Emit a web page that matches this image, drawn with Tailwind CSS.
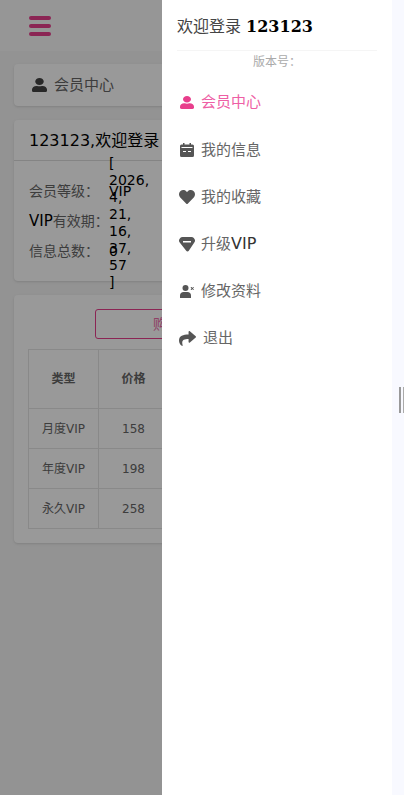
<!DOCTYPE html>
<html lang="zh-CN">
<head>
  <meta charset="UTF-8">
  <meta name="viewport" content="width=device-width, initial-scale=1.0">
  <title>会员中心</title>
  <script src="https://cdn.jsdelivr.net/npm/@tailwindcss/browser@4"></script>
</head>
<body class="bg-[#f5f5f5] font-['DejaVu_Sans','Noto_Sans_CJK_SC',sans-serif] text-[#333]">
  <div class="relative h-[795px] w-[404px] overflow-hidden">
    <!-- Page behind the drawer -->
    <header class="flex h-[51px] items-center bg-[#fafafa] pl-[29px]">
      <div class="flex w-[22px] flex-col gap-[4px]">
        <span class="h-[4px] rounded-full bg-[#e83e8c]"></span>
        <span class="h-[4px] rounded-full bg-[#e83e8c]"></span>
        <span class="h-[4px] rounded-full bg-[#e83e8c]"></span>
      </div>
    </header>

    <main class="flex flex-col gap-[14px] px-[14px] pt-[13px]">
      <!-- Title card -->
      <div class="flex h-[42px] items-center gap-[7px] rounded bg-white pl-[18px] text-[15px] text-[#666] shadow-sm">
        <svg viewBox="0 0 448 512" preserveAspectRatio="none" class="h-[14px] w-[15px] fill-[#444]"><path d="M224 256c70.7 0 128-57.3 128-128S294.7 0 224 0 96 57.3 96 128s57.3 128 128 128zm89.6 32h-16.7c-22.2 10.2-46.9 16-72.9 16s-50.6-5.8-72.9-16h-16.7C60.2 288 0 348.2 0 422.4V464c0 26.5 21.5 48 48 48h352c26.500 0 48-21.5 48-48v-41.6c0-74.2-60.2-134.4-134.4-134.4z"/></svg>
        <span>会员中心</span>
      </div>

      <!-- Member info card -->
      <div class="h-[161px] rounded bg-white shadow-sm">
        <div class="flex h-[41px] items-center border-b border-[#ddd] pl-[15px] pt-[2px] text-[16px] text-black">123123,欢迎登录</div>
        <div class="flex flex-col pl-[15px] pt-[15px] text-[14px] text-[#666]">
          <div class="flex h-[30px] items-center">
            <span class="w-[80px] shrink-0 whitespace-nowrap">会员等级&#65306;</span>
            <span class="text-black">VIP</span>
          </div>
          <div class="flex h-[30px] items-center">
            <span class="w-[80px] shrink-0 whitespace-nowrap"><span class="text-[15px] text-black">VIP</span>有效期&#65306;</span>
            <span class="pt-[4px] leading-[17px] text-black">[<br>2026,<br>4,<br>21,<br>16,<br>37,<br>57<br>]</span>
          </div>
          <div class="flex h-[30px] items-center">
            <span class="w-[80px] shrink-0 whitespace-nowrap">信息总数&#65306;</span>
            <span class="text-black">0</span>
          </div>
        </div>
      </div>

      <!-- VIP price card -->
      <div class="h-[248px] rounded bg-white pt-[14px] shadow-sm">
        <button class="mx-auto block h-[30px] w-[214px] rounded-[3px] border border-[#e83e8c] pl-[57px] text-left text-[14px] text-[#ee6aa8]">购买VIP</button>
        <table class="ml-[14px] mt-[10px] w-[348px] table-fixed border-collapse text-center text-[12px] text-[#666]">
          <tbody>
            <tr class="h-[59px] font-bold">
              <td class="w-[70px] border border-[#e5e5e5]">类型</td>
              <td class="w-[70px] border border-[#e5e5e5]">价格</td>
              <td class="border border-[#e5e5e5]">时长</td>
            </tr>
            <tr class="h-[40px]">
              <td class="border border-[#e5e5e5]">月度VIP</td>
              <td class="border border-[#e5e5e5]">158</td>
              <td class="border border-[#e5e5e5]">30</td>
            </tr>
            <tr class="h-[40px]">
              <td class="border border-[#e5e5e5]">年度VIP</td>
              <td class="border border-[#e5e5e5]">198</td>
              <td class="border border-[#e5e5e5]">365</td>
            </tr>
            <tr class="h-[40px]">
              <td class="border border-[#e5e5e5]">永久VIP</td>
              <td class="border border-[#e5e5e5]">258</td>
              <td class="border border-[#e5e5e5]">永久</td>
            </tr>
          </tbody>
        </table>
      </div>
    </main>

    <!-- Dimming layer -->
    <div class="absolute inset-0 bg-black/40"></div>

    <!-- Drawer -->
    <aside class="absolute inset-y-0 left-[162px] w-[242px] bg-white">
      <div class="absolute inset-y-0 right-0 w-[12px] bg-[#f8f9ff]">
        <div class="absolute left-[7px] top-[387px] h-[26px] w-[2px] bg-[#999]"></div>
        <div class="absolute left-[11px] top-[387px] h-[26px] w-[1px] bg-[#aaa]"></div>
      </div>
      <div class="mx-[15px] flex h-[51px] w-[200px] items-center border-b border-[#f5f5f5] pt-[3px] text-[16px] text-[#444]">
        <span>欢迎登录&nbsp;<b class="font-['DejaVu_Serif'] font-bold text-black">123123</b></span>
      </div>
      <p class="w-[230px] pt-[3px] text-center text-[12px] leading-[17px] text-[#aaa]">版本号&#65306;</p>

      <nav class="mt-[8px] flex flex-col pl-[18px] text-[15px] text-[#666]">
        <a class="flex h-[47.2px] items-center gap-[7px] text-[#ee5fa5]">
          <svg viewBox="0 0 448 512" preserveAspectRatio="none" class="h-[13px] w-[14px] fill-[#e83e8c]"><path d="M224 256c70.7 0 128-57.3 128-128S294.7 0 224 0 96 57.3 96 128s57.3 128 128 128zm89.6 32h-16.7c-22.2 10.2-46.9 16-72.9 16s-50.6-5.8-72.9-16h-16.7C60.2 288 0 348.2 0 422.4V464c0 26.500 21.5 48 48 48h352c26.500 0 48-21.5 48-48v-41.6c0-74.2-60.2-134.4-134.4-134.4z"/></svg>
          <span>会员中心</span>
        </a>
        <a class="flex h-[47.2px] items-center gap-[7px]">
          <svg viewBox="0 0 14 14" class="h-[14px] w-[14px] fill-[#555]"><path fill-rule="evenodd" d="M3 0h1.500v1.500h5V0H11v1.500h1.500A1.500 1.500 0 0 1 14 3v9.500a1.500 1.500 0 0 1-1.500 1.500h-11A1.500 1.500 0 0 1 0 12.500V3a1.500 1.500 0 0 1 1.500-1.500H3zM1.500 4v1h11V4zM3 8v1h3V8zm5 0v1h3V8z"/></svg>
          <span>我的信息</span>
        </a>
        <a class="flex h-[47.2px] items-center gap-[6px]">
          <svg viewBox="0 0 512 512" class="-ml-[1px] h-[16px] w-[16px] fill-[#555]"><path d="M462.3 62.6C407.5 15.9 326 24.3 275.7 76.2L256 96.5l-19.7-20.3C186.1 24.300 104.5 15.9 49.7 62.6c-62.8 53.6-66.1 149.8-9.9 207.9l193.5 199.8c12.5 12.9 32.8 12.9 45.3 0l193.500-199.8c56.3-58.1 53-154.3-9.8-207.900z"/></svg>
          <span>我的收藏</span>
        </a>
        <a class="flex h-[47.2px] items-center gap-[6px]">
          <svg viewBox="0 0 16 15" class="-ml-[1px] h-[15px] w-[16px] fill-[#555]"><path fill-rule="evenodd" d="M3.500 0h9a3 3 0 0 1 2.300 1.100l.5.600a3 3 0 0 1 0 3.700l-5.500 8.300a1.500 1.500 0 0 1-2.600 0L.700 5.400a3 3 0 0 1 0-3.700l.5-.600A3 3 0 0 1 3.500 0zM4 4v1.500h8V4z"/></svg>
          <span>升级<span class="text-[16px] text-[#333]">VIP</span></span>
        </a>
        <a class="flex h-[47.2px] items-center gap-[7px]">
          <svg viewBox="0 0 14 13" class="h-[13px] w-[14px] fill-[#555]"><circle cx="5.500" cy="3" r="3"/><path d="M0 13v-2.500C0 8.500 1.500 7 3.500 7h4c2 0 3.500 1.500 3.500 3.500V13z"/><path d="M10.500 2h1l1 1 .5-1h1l-1 1.500 1 1.500h-1l-.5-1-1 1h-1l1-1.500z"/></svg>
          <span>修改资料</span>
        </a>
        <a class="flex h-[47.2px] items-center gap-[7px]">
          <svg viewBox="0 0 512 512" class="-ml-[1px] h-[17px] w-[17px] fill-[#555]"><path d="M503.691 189.836L327.687 37.851C312.281 24.546 288 35.347 288 56.015v80.053C127.371 137.907 0 170.100 0 322.326c0 61.441 39.581 122.309 83.333 154.132 13.653 9.931 33.111-2.533 28.077-18.631C66.066 312.814 132.917 274.316 288 272.085V360c0 20.700 24.300 31.453 39.687 18.164l176.004-152c11.071-9.562 11.086-26.753 0-36.328z"/></svg>
          <span>退出</span>
        </a>
      </nav>
    </aside>
  </div>
</body>
</html>
